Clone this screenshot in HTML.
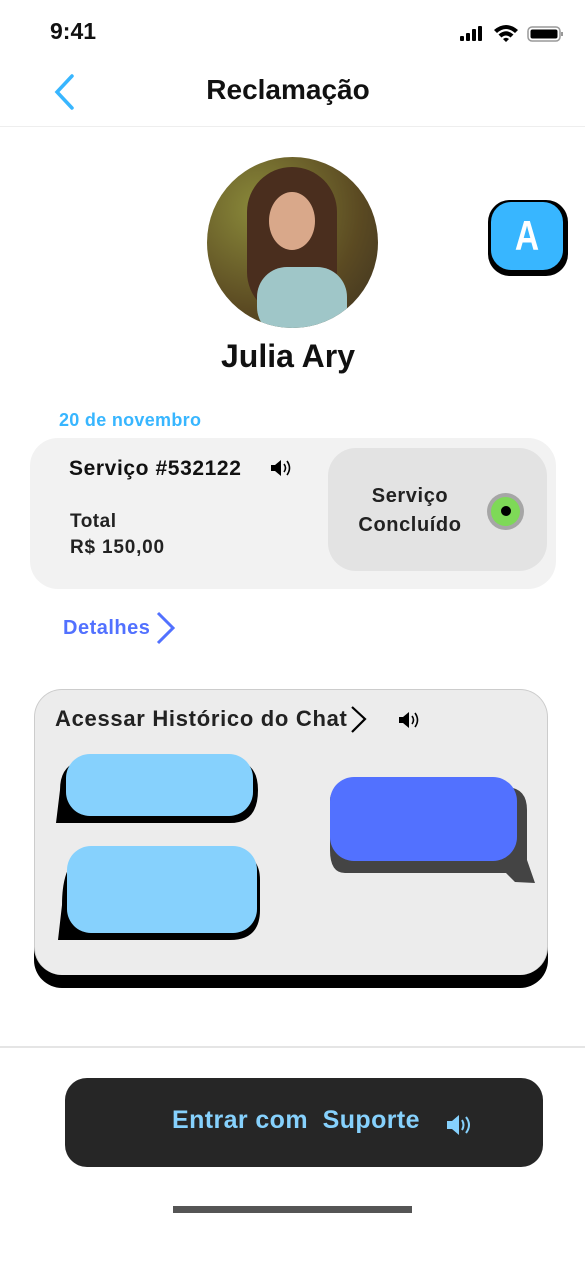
<!DOCTYPE html>
<html><head><meta charset="utf-8"><style>
*{margin:0;padding:0;box-sizing:border-box}
body{width:585px;height:1266px;background:#fff;position:relative;overflow:hidden;font-family:"Liberation Sans","DejaVu Sans",sans-serif;color:#111}
.a{position:absolute;white-space:nowrap}
</style></head><body>
<div class="a" style="left:50px;top:18px;font-size:23px;font-weight:bold">9:41</div>
<svg class="a" style="left:458px;top:22px" width="108" height="22" viewBox="0 0 108 22">
<rect x="2" y="14" width="4" height="5" rx="1" fill="#000"/><rect x="8" y="11" width="4" height="8" rx="1" fill="#000"/><rect x="14" y="7" width="4" height="12" rx="1" fill="#000"/><rect x="20" y="4" width="4" height="15" rx="1" fill="#000"/>
<path d="M36 8 Q48 -2 60 8 L57 11 Q48 3 39 11Z M40.5 12.5 Q48 6 55.5 12.5 L52.5 15.5 Q48 11.5 43.5 15.5Z M45 17 L48 20 L51 17 Q48 14.5 45 17Z" fill="#000"/>
<rect x="70" y="5" width="32" height="14" rx="4" fill="none" stroke="#999" stroke-width="1.5"/><rect x="72.5" y="7.5" width="27" height="9" rx="2" fill="#000"/><rect x="103" y="10" width="2" height="4" fill="#999"/>
</svg>
<svg class="a" style="left:50px;top:73px" width="28" height="38"><path d="M22 3 L7 19 L22 35" fill="none" stroke="#38b6ff" stroke-width="3.5" stroke-linecap="round"/></svg>
<div class="a" style="left:0;width:576px;top:74px;text-align:center;font-size:28px;font-weight:bold">Reclamação</div>
<div class="a" style="left:0;top:126px;width:585px;height:1px;background:#eee"></div>

<div class="a" style="left:207px;top:157px;width:171px;height:171px;border-radius:50%;overflow:hidden;background:radial-gradient(circle at 30% 30%,#8a8a3a,#5b4a22 60%,#3a3020)">
<div class="a" style="left:40px;top:10px;width:90px;height:150px;border-radius:45px;background:#4a2e1e"></div>
<div class="a" style="left:62px;top:35px;width:46px;height:58px;border-radius:50%;background:#d9a88a"></div>
<div class="a" style="left:50px;top:110px;width:90px;height:70px;border-radius:30px;background:#9fc6c8"></div>
</div>
<div class="a" style="left:0;width:576px;top:338px;text-align:center;font-size:32px;font-weight:bold">Julia Ary</div>
<div class="a" style="left:488px;top:200px;width:80px;height:76px;border-radius:22px;background:#000"></div>
<div class="a" style="left:491px;top:202px;width:72px;height:68px;border-radius:20px;background:#38b6ff"></div>
<div class="a" style="left:491px;top:202px;width:72px;height:68px;color:#fff;font-size:42px;font-weight:bold;text-align:center;line-height:68px;transform:scaleX(0.8)">A</div>

<div class="a" style="left:59px;top:410px;color:#38b6ff;font-size:18px;font-weight:bold;letter-spacing:0.3px">20 de novembro</div>
<div class="a" style="left:30px;top:438px;width:526px;height:151px;border-radius:28px;background:#f2f2f2"></div>
<div class="a" style="left:69px;top:457px;font-size:21px;font-weight:bold;letter-spacing:0.6px">Serviço #532122</div>
<svg class="a" style="left:270px;top:458px" width="24" height="20"><path d="M1 7h4l6-5v16l-6-5H1z" fill="#000"/><path d="M14 6q3 4 0 8M17 3q5 7 0 14" fill="none" stroke="#000" stroke-width="1.6"/></svg>
<div class="a" style="left:70px;top:511px;font-size:19px;font-weight:bold;color:#222;letter-spacing:0.5px">Total</div>
<div class="a" style="left:70px;top:537px;font-size:19px;font-weight:bold;color:#222;letter-spacing:0.8px">R$ 150,00</div>
<div class="a" style="left:328px;top:448px;width:219px;height:123px;border-radius:28px;background:#e3e3e3"></div>
<div class="a" style="left:340px;top:482px;width:140px;text-align:center;font-size:20px;font-weight:bold;color:#222;line-height:29px;letter-spacing:0.6px">Serviço<br>Concluído</div>
<div class="a" style="left:487px;top:493px;width:37px;height:37px;border-radius:50%;background:#a6a6a6"></div>
<div class="a" style="left:491px;top:497px;width:29px;height:29px;border-radius:50%;background:#7ed957"></div>
<div class="a" style="left:501px;top:506px;width:10px;height:10px;border-radius:50%;background:#000"></div>
<div class="a" style="left:63px;top:617px;color:#5271ff;font-size:20px;font-weight:bold;letter-spacing:0.5px">Detalhes</div>
<svg class="a" style="left:153px;top:610px" width="26" height="36"><path d="M5 3 L20 18 L5 33" fill="none" stroke="#5271ff" stroke-width="3"/></svg>

<div class="a" style="left:34px;top:700px;width:514px;height:288px;border-radius:28px;background:#000"></div>
<div class="a" style="left:34px;top:689px;width:514px;height:286px;border-radius:28px;background:#ececec;border:1px solid #ccc;border-bottom:none"></div>
<div class="a" style="left:55px;top:706px;font-size:22px;font-weight:bold;color:#222;letter-spacing:0.7px">Acessar Histórico do Chat</div>
<svg class="a" style="left:348px;top:705px" width="22" height="30"><path d="M4 2 L17 14 L4 27" fill="none" stroke="#000" stroke-width="2.2"/></svg>
<svg class="a" style="left:398px;top:710px" width="24" height="20"><path d="M1 7h4l6-5v16l-6-5H1z" fill="#000"/><path d="M14 6q3 4 0 8M17 3q5 7 0 14" fill="none" stroke="#000" stroke-width="1.6"/></svg>

<svg class="a" style="left:0;top:0" width="585" height="1266">
<path d="M56 823 L60 790 Q60 760 90 760 L230 760 Q258 760 258 790 Q258 823 230 823 Z" fill="#000"/>
<path d="M58 940 L62 905 Q62 852 95 852 L230 852 Q260 852 260 880 L260 910 Q260 940 230 940 Z" fill="#000"/>
<path d="M345 873 Q330 873 330 850 L330 800 Q330 787 350 787 L505 787 Q527 787 527 810 L527 860 L535 883 L515 882 L506 873 Z" fill="#444"/>
</svg>
<div class="a" style="left:66px;top:754px;width:187px;height:62px;border-radius:24px;background:#86d1fd"></div>
<div class="a" style="left:67px;top:846px;width:190px;height:87px;border-radius:24px;background:#86d1fd"></div>
<div class="a" style="left:330px;top:777px;width:187px;height:84px;border-radius:24px;background:#5271ff"></div>

<div class="a" style="left:0;top:1046px;width:585px;height:2px;background:#e5e5e5"></div>
<div class="a" style="left:65px;top:1078px;width:478px;height:89px;border-radius:22px;background:#262626"></div>
<div class="a" style="left:172px;top:1106px;font-size:25px;font-weight:bold;color:#86d1fd;white-space:pre;letter-spacing:0.4px">Entrar com  Suporte</div>
<svg class="a" style="left:446px;top:1113px" width="28" height="24"><path d="M1 8h5l7-6v20l-7-6H1z" fill="#86d1fd"/><path d="M16 7q3 5 0 10M20 4q6 8 0 16" fill="none" stroke="#86d1fd" stroke-width="2"/></svg>
<div class="a" style="left:173px;top:1206px;width:239px;height:7px;background:#555"></div>
</body></html>
